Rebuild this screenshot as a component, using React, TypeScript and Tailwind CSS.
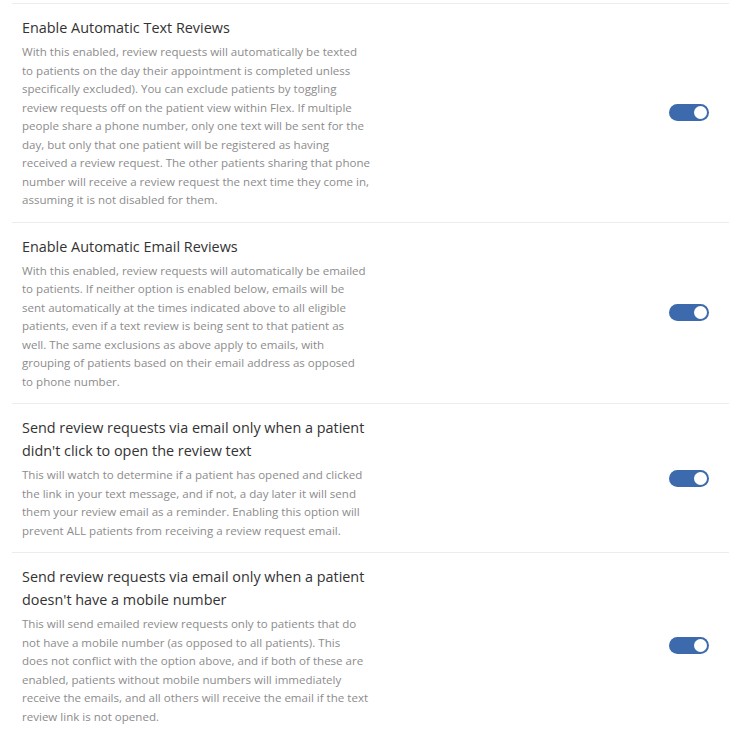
import React from "react";

interface Setting {
  title: string;
  lines: string[];
  enabled: boolean;
}

// description lines are kept as shown, so the wrapping matches the panel
const settings: Setting[] = [
  {
    title: "Enable Automatic Text Reviews",
    lines: [
      "With this enabled, review requests will automatically be texted",
      "to patients on the day their appointment is completed unless",
      "specifically excluded). You can exclude patients by toggling",
      "review requests off on the patient view within Flex. If multiple",
      "people share a phone number, only one text will be sent for the",
      "day, but only that one patient will be registered as having",
      "received a review request. The other patients sharing that phone",
      "number will receive a review request the next time they come in,",
      "assuming it is not disabled for them.",
    ],
    enabled: true,
  },
  {
    title: "Enable Automatic Email Reviews",
    lines: [
      "With this enabled, review requests will automatically be emailed",
      "to patients. If neither option is enabled below, emails will be",
      "sent automatically at the times indicated above to all eligible",
      "patients, even if a text review is being sent to that patient as",
      "well. The same exclusions as above apply to emails, with",
      "grouping of patients based on their email address as opposed",
      "to phone number.",
    ],
    enabled: true,
  },
  {
    title:
      "Send review requests via email only when a patient didn't click to open the review text",
    lines: [
      "This will watch to determine if a patient has opened and clicked",
      "the link in your text message, and if not, a day later it will send",
      "them your review email as a reminder. Enabling this option will",
      "prevent ALL patients from receiving a review request email.",
    ],
    enabled: true,
  },
  {
    title:
      "Send review requests via email only when a patient doesn't have a mobile number",
    lines: [
      "This will send emailed review requests only to patients that do",
      "not have a mobile number (as opposed to all patients). This",
      "does not conflict with the option above, and if both of these are",
      "enabled, patients without mobile numbers will immediately",
      "receive the emails, and all others will receive the email if the text",
      "review link is not opened.",
    ],
    enabled: true,
  },
];

const Toggle: React.FC<{ on: boolean }> = ({ on }) => (
  <div
    className={`w-[40px] h-[17px] rounded-full flex items-center px-[2px] shrink-0 ${
      on ? "bg-[#3d6aad] justify-end" : "bg-[#ccc] justify-start"
    }`}
  >
    <div className="w-[13px] h-[13px] rounded-full bg-white" />
  </div>
);

export default function App() {
  return (
    <div className="bg-white h-[733px] overflow-hidden pt-[3px] pl-3 pr-1 font-['Open_Sans',sans-serif]">
      {settings.map((s) => (
        <div
          key={s.title}
          className="border-t border-[#ececec] flex items-center justify-between pl-[10px] pr-[20px] pt-[12px] pb-[12px]"
        >
          <div className="w-[350px]">
            <h3 className="text-[14.4px] leading-[23px] text-[#333]">{s.title}</h3>
            <p className="mt-[4px] text-[11.55px] leading-[18.5px] text-[#8c8c8c] whitespace-nowrap">
              {s.lines.map((line) => (
                <span key={line} className="block">
                  {line}
                </span>
              ))}
            </p>
          </div>
          <Toggle on={s.enabled} />
        </div>
      ))}
    </div>
  );
}
